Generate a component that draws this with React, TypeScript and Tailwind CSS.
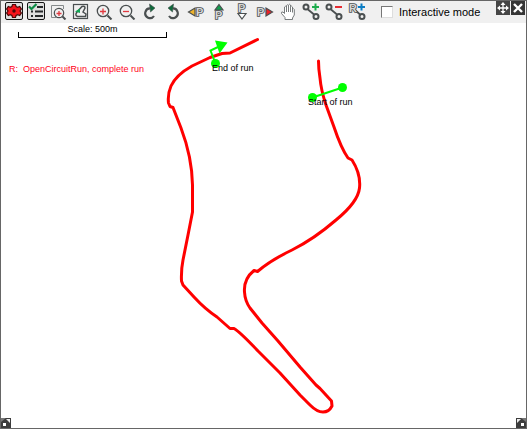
import { useState, type ReactNode } from "react";

const INK = "#4a4f50";

type Tool = {
    label: string;
    icon: ReactNode;
};

function Icon({ children }: { children: ReactNode }) {
    return (
        <svg viewBox="0 0 18 18" className="block size-[18px]" fill="none" aria-hidden="true">
            {children}
        </svg>
    );
}

/* Outlined letter used by the "move point" and "rename" tools */
function Letter({ x, y, char = "P" }: { x: number; y: number; char?: string }) {
    return (
        <text
            x={x}
            y={y}
            fontFamily="'Liberation Sans', Arial, sans-serif"
            fontSize="11"
            fontWeight="bold"
            fill="#d4d6d6"
            stroke={INK}
            strokeWidth="1.6"
            paintOrder="stroke"
        >
            {char}
        </text>
    );
}

function Magnifier({ minus = false }: { minus?: boolean }) {
    return (
        <Icon>
            <circle cx="8" cy="9" r="5.700" stroke={INK} strokeWidth="1.3" />
            <path d="M12.500 13.500l4 4" stroke={INK} strokeWidth="2" />
            <path d={minus ? "M5 9.500h6" : "M5 9.500h6M8 6.500v6"} stroke="#e03a40" strokeWidth="1.3" />
        </Icon>
    );
}

function Nodes({ children }: { children?: ReactNode }) {
    return (
        <Icon>
            <path d="M6 7.500l6 5" stroke={INK} strokeWidth="1.8" />
            <circle cx="4" cy="5" r="2.500" stroke={INK} strokeWidth="2" />
            <circle cx="14" cy="14.500" r="2.500" stroke={INK} strokeWidth="2" />
            {children}
        </Icon>
    );
}

const FRAMED_TOOLS: Tool[] = [
    {
        label: "Settings",
        icon: (
            <Icon>
                <path
                    d="M7.500 2.500h3l.6 2.100 1.600.8 2-.9 1.700 2.600-1.400 1.900 1.400 1.900-1.700 2.600-2-.9-1.600.8-.6 2.100h-3l-.6-2.100-1.600-.8-2 .9-1.700-2.600L3 9 1.600 7.100l1.700-2.600 2 .9 1.600-.8z"
                    fill="#f5141c"
                    stroke="#4a0808"
                    strokeWidth="1.200"
                />
                <circle cx="9" cy="9" r="1.700" fill="#4a0808" />
            </Icon>
        ),
    },
    {
        label: "Checklist",
        icon: (
            <Icon>
                <path d="M10 5h6M8 9.500h8M8 14h8" stroke="#26292a" strokeWidth="2" />
                <path d="M4 9.500h2M4 14h2" stroke="#26292a" strokeWidth="2" />
                <path d="M2 4.500l2.500 2.500 5-5" stroke="#0d8b45" strokeWidth="2.200" />
            </Icon>
        ),
    },
];

const TOOLS: Tool[] = [
    {
        label: "Zoom to area",
        icon: (
            <Icon>
                <path d="M14.500 7V3.500h-12v12H7" stroke="#858a8b" />
                <circle cx="10" cy="11" r="4.700" fill="#f0f0f0" stroke={INK} strokeWidth="1.200" />
                <path d="M13.500 14.500l3 3" stroke={INK} strokeWidth="2" />
                <path d="M7.500 11.500h5M10 9v5" stroke="#e03a40" strokeWidth="1.300" />
            </Icon>
        ),
    },
    {
        label: "Fit track",
        icon: (
            <Icon>
                <rect x="1.500" y="2.500" width="14" height="14" stroke={INK} strokeWidth="1.200" />
                <path
                    d="M5 10l5-5.500q3-.8 3 1.500l-2 4 3 2-.5 2.500H5.500q-3-1-.5-4.500"
                    stroke={INK}
                    strokeWidth="1.500"
                />
                <path d="M3 9.500l5-3v4.500z" fill="#12a454" />
            </Icon>
        ),
    },
    { label: "Zoom in", icon: <Magnifier /> },
    { label: "Zoom out", icon: <Magnifier minus /> },
    {
        label: "Rotate clockwise",
        icon: (
            <Icon>
                <path d="M9.500 6.500A4.800 4.800 0 1 0 13 14" stroke={INK} strokeWidth="2.200" />
                <path d="M8.500 2l5.500 4-4.500 4z" fill="#0d6a3a" stroke={INK} strokeWidth=".6" />
            </Icon>
        ),
    },
    {
        label: "Rotate anticlockwise",
        icon: (
            <Icon>
                <path d="M8.500 6.500A4.800 4.800 0 1 1 5 14" stroke={INK} strokeWidth="2.200" />
                <path d="M9.500 2L4 6l4.500 4z" fill="#0d6a3a" stroke={INK} strokeWidth=".6" />
            </Icon>
        ),
    },
    {
        label: "Move point left",
        icon: (
            <Icon>
                <path d="M1.500 10L8 6v8z" fill="#eeb32d" stroke={INK} strokeWidth="1.200" />
                <Letter x={9} y={14} />
            </Icon>
        ),
    },
    {
        label: "Move point up",
        icon: (
            <Icon>
                <path d="M9 2.500l4 5.500H5z" fill="#0fa04c" stroke={INK} strokeWidth="1.200" />
                <Letter x={5} y={17} />
            </Icon>
        ),
    },
    {
        label: "Move point down",
        icon: (
            <Icon>
                <Letter x={5} y={10} />
                <path d="M9 17l4-5.500H5z" fill="#fff" stroke={INK} strokeWidth="1.200" />
            </Icon>
        ),
    },
    {
        label: "Move point right",
        icon: (
            <Icon>
                <Letter x={1} y={14} />
                <path d="M16.500 10L10 6v8z" fill="#ea2228" stroke={INK} strokeWidth="1.200" />
            </Icon>
        ),
    },
    {
        label: "Pan",
        icon: (
            <Icon>
                <path
                    d="M6 17.500v-2L2.500 11.500Q2 9.500 4 10l1.500 1.500V5q1-1.500 2 0V3.500q1-1.500 2 0V3q1-1.500 2 0v1.500q1.200-1 2 .5v2q1-1 1.800.5V13l-1.800 3v1.500zM7.500 5v5M9.500 3.500V10M11.500 4.500V10M13.500 7v3.500"
                    fill="#fff"
                    stroke="#686c6d"
                    strokeWidth=".9"
                />
            </Icon>
        ),
    },
    {
        label: "Add node",
        icon: (
            <Nodes>
                <path d="M10 5h7M13.500 1.500v7" stroke="#1cab4c" strokeWidth="2" />
            </Nodes>
        ),
    },
    {
        label: "Remove node",
        icon: (
            <Nodes>
                <path d="M10 5h7" stroke="#e52b31" strokeWidth="2" />
            </Nodes>
        ),
    },
    {
        label: "Add route node",
        icon: (
            <Icon>
                <path d="M7 8l5 4.500" stroke={INK} strokeWidth="1.800" />
                <Letter x={1} y={10} char="R" />
                <circle cx="14" cy="14.500" r="2.500" stroke={INK} strokeWidth="2" />
                <path d="M10 5h7M13.500 1.500v7" stroke="#0b7dc4" strokeWidth="2" />
            </Icon>
        ),
    },
];

const TRACK =
    "M257.500 39.500L230 53 222 53.500 210 57.500 192 66Q176 75 171 86 167.500 94 168.500 103L170 106.500 173 107.500 181 128Q192 157 192.500 185L192.500 212 188 235 183 260Q181 270 181.500 281L183 285 194 297Q205 309 217 317L230 328.500 234 328.500Q240 332 258 351L280 373 300 395 310 405Q317 412 323 412 329 412 332 406L331.500 401 320 388.500 316 385 300 367 278 341 262 323 250 308Q245 301 244.500 292 243.500 279 254 270.500L257.500 271.500Q271 260 292 250 314 239 336 220 358 202 359.500 188 361 174 352 160L348 158Q341 148 334 127L326 105Q321 90 320 78 318.500 69 318.500 61";

function ToolButton({ tool, framed = false }: { tool: Tool; framed?: boolean }) {
    return (
        <button
            type="button"
            aria-label={tool.label}
            title={tool.label}
            className={
                framed
                    ? "size-[18px] shrink-0 rounded-xs outline-1 -outline-offset-1 outline-[#151515] bg-[#dedede]"
                    : "size-[18px] shrink-0"
            }
        >
            {tool.icon}
        </button>
    );
}

function Toolbar() {
    const [interactive, setInteractive] = useState(false);

    return (
        <header className="flex items-start bg-[#f0f0f0] h-[22px] shrink-0">
            <div className="flex gap-1 pt-px pl-1">
                {FRAMED_TOOLS.map((t) => (
                    <ToolButton key={t.label} tool={t} framed />
                ))}
            </div>
            <div className="flex gap-[5px] pt-px pl-1">
                {TOOLS.map((t) => (
                    <ToolButton key={t.label} tool={t} />
                ))}
            </div>
            <label className="flex items-center gap-[6px] pt-1 pl-[15px] text-[11px] leading-[14px] whitespace-nowrap">
                <input
                    type="checkbox"
                    checked={interactive}
                    onChange={(e) => setInteractive(e.target.checked)}
                    className="size-3 appearance-none bg-white border border-t-[#777] border-l-[#777] border-r-[#ddd] border-b-[#ddd] checked:bg-[#444]"
                />
                Interactive mode
            </label>
            <div className="ml-auto flex gap-px pr-px">
                <button type="button" aria-label="Move panel" className="size-[14px] bg-[#454545]">
                    <svg viewBox="0 0 14 14" className="block size-full" aria-hidden="true">
                        <path d="M7 2v10M2 7h10" stroke="#fff" strokeWidth="1.300" />
                        <path d="M7 1l2.500 3h-5zM7 13l2.500-3h-5zM1 7l3-2.500v5zM13 7l-3-2.500v5z" fill="#fff" />
                    </svg>
                </button>
                <button type="button" aria-label="Close panel" className="size-[14px] bg-[#353535]">
                    <svg viewBox="0 0 14 14" className="block size-full" aria-hidden="true">
                        <path d="M3 3l8 8M11 3l-8 8" stroke="#fff" strokeWidth="2.400" />
                    </svg>
                </button>
            </div>
        </header>
    );
}

function TrackMap() {
    return (
        <svg viewBox="1 23 525 405" className="block w-full" role="img" aria-label="Track map">
            <path d={TRACK} fill="none" stroke="#f00" strokeWidth="3" strokeLinejoin="round" strokeLinecap="round" />
            <g stroke="#0f0" fill="#0f0" strokeWidth="2">
                <path d="M215.500 63.500L210.500 50.500 218 47" fill="none" />
                <path d="M215 40.500L227.500 42.500 219.500 53.500z" stroke="none" />
                <circle cx="215.500" cy="63.500" r="4.500" stroke="none" />
                <path d="M312.500 97.500L342.500 87.500" />
                <circle cx="312.500" cy="97.500" r="4.500" stroke="none" />
                <circle cx="342.500" cy="87.500" r="4.500" stroke="none" />
            </g>
            <g fontSize="9" fill="#000">
                <text x="212" y="71">End of run</text>
                <text x="308" y="105">Start of run</text>
            </g>
        </svg>
    );
}

function ResizeGrip({ side }: { side: "left" | "right" }) {
    return (
        <button
            type="button"
            aria-label={`Resize from bottom ${side}`}
            className={
                side === "left"
                    ? "absolute bottom-0 left-0 size-[10px] bg-[#3c3c3c]"
                    : "absolute bottom-0 right-0 size-[10px] bg-[#3c3c3c] -scale-x-100"
            }
        >
            <svg viewBox="0 0 10 10" className="block size-full" aria-hidden="true">
                <path d="M5 1h4v4z" fill="#eee" />
                <path d="M0 0h5L0 4z" fill="#777" />
                <rect x="2" y="5" width="3" height="3" fill="#fff" />
            </svg>
        </button>
    );
}

export default function App() {
    return (
        <div className="flex min-h-screen flex-col border border-[#666] bg-white font-['Liberation_Sans',Arial,sans-serif] text-black">
            <Toolbar />
            <main className="relative grow">
                <TrackMap />
                <div className="absolute top-0 left-0 pl-2 text-[9px] leading-3">
                    <div className="ml-[9px] flex w-[149px] flex-col">
                        <p className="text-center">Scale: 500m</p>
                        <div className="-mt-[3px] h-[6px] border border-t-0 border-black" />
                    </div>
                    <p className="pt-[25px] whitespace-pre text-[#ff0018]">R:  OpenCircuitRun, complete run</p>
                </div>
                <ResizeGrip side="left" />
                <ResizeGrip side="right" />
            </main>
        </div>
    );
}
